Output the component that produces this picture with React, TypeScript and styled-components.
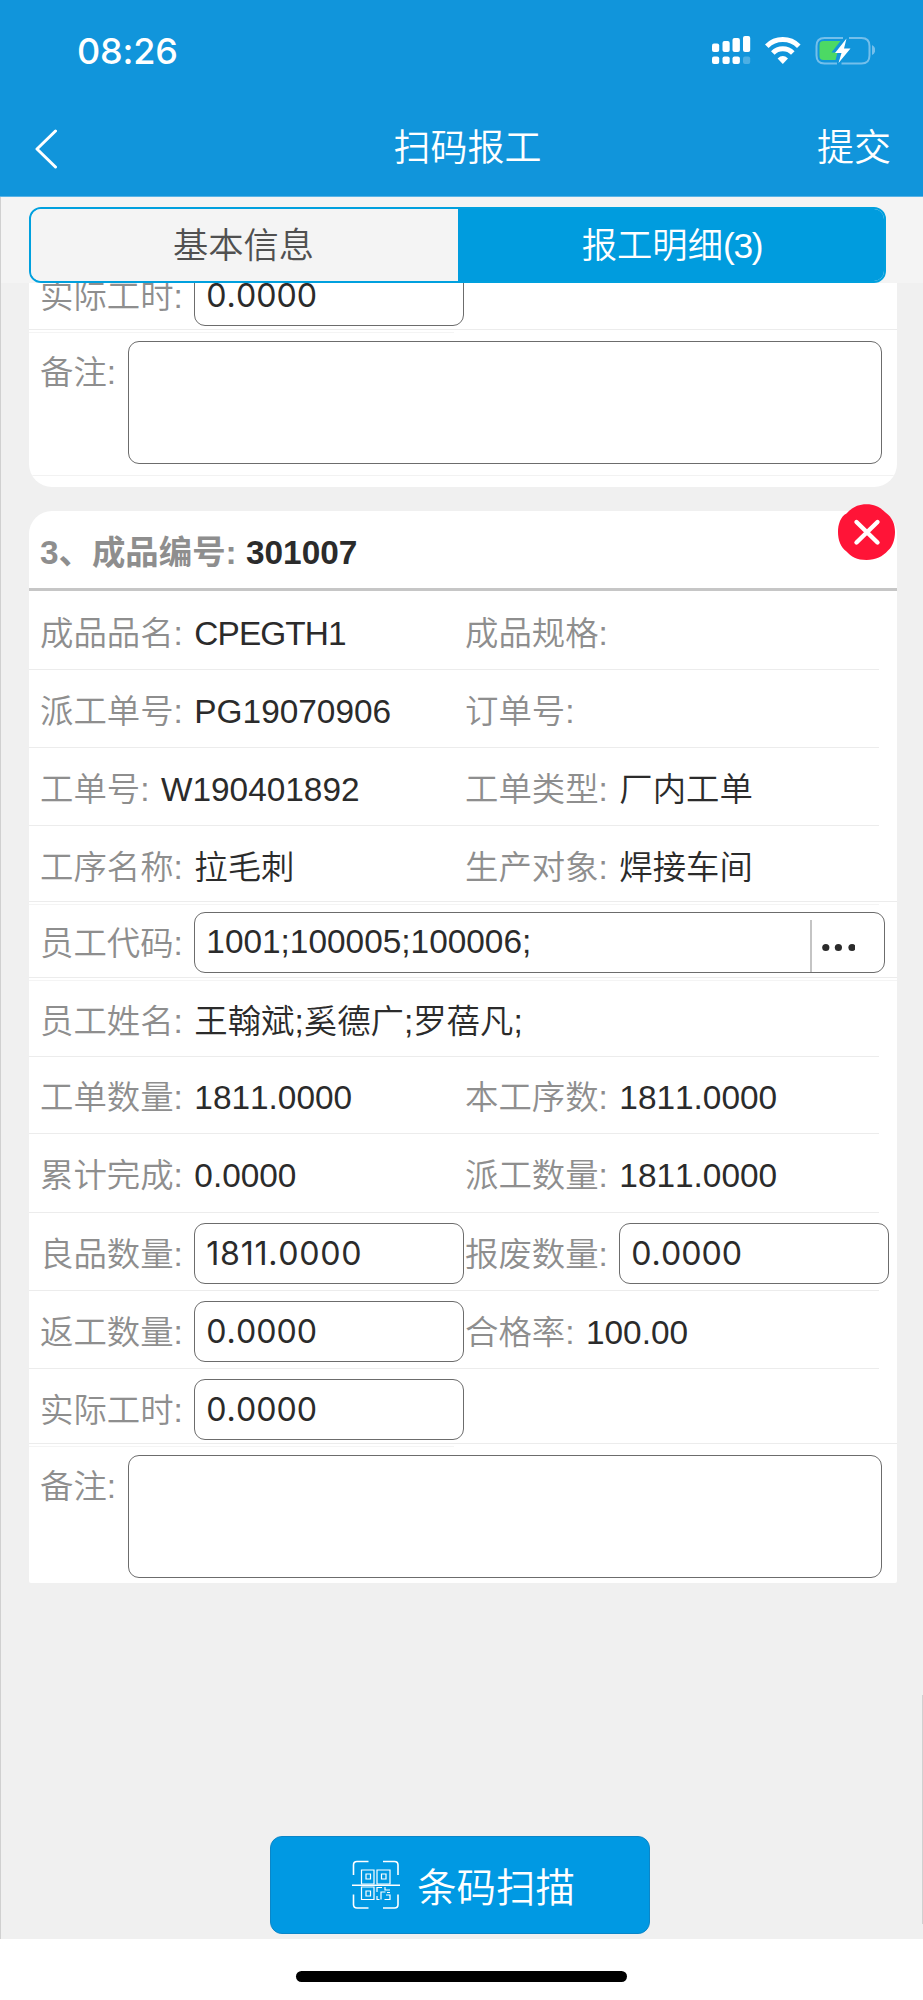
import React from 'react';
import styled, { createGlobalStyle, css } from 'styled-components';

const sans = `"Liberation Sans", "Noto Sans CJK SC", sans-serif`;

const GlobalStyle = createGlobalStyle`
  *, *::before, *::after { box-sizing: border-box; }
  body { margin: 0; background: #fff; font-family: ${sans}; font-kerning: none; color: #2b2b2b; }
  button, input, textarea { font: inherit; color: inherit; }
`;

const Page = styled.div`
  width: 923px;
  height: 2000px;
  display: flex;
  flex-direction: column;
  overflow: hidden;
`;

const TopArea = styled.header`
  height: 197px;
  flex: none;
  background: #1195db;
  border-bottom: 1px solid #58b3e6;
  color: #fff;
`;

const StatusBar = styled.div`
  height: 98px;
  padding: 0 48px 0 77px;
  display: flex;
  align-items: center;
  justify-content: space-between;
`;

const Clock = styled.span`
  padding-top: 4px;
  font-family: Inter, sans-serif;
  font-size: 36px;
  font-weight: 500;
  letter-spacing: -0.2px;
`;

const StatusIcons = styled.svg`
  display: block;
  width: 167px;
  height: 34px;
`;

const NavBar = styled.div`
  height: 98px;
  padding: 2px 32px 0 34px;
  display: grid;
  grid-template-columns: 84px 1fr 74px;
  align-items: center;
  font-size: 37px;
  font-weight: 350;
  line-height: 98px;
`;

const BackIcon = styled.svg`
  display: block;
  width: 24px;
  height: 40px;
`;

const Title = styled.h1`
  margin: 0;
  font: inherit;
  text-align: center;
`;

const TabStrip = styled.div`
  height: 86px;
  flex: none;
  padding: 10px 37px 0 28px;
  background: #f4f4f4;
  border-left: 1px solid #d0d0d0;
`;

const Tabs = styled.div`
  display: grid;
  grid-template-columns: 427px 430px;
  height: 76px;
  border: 2px solid #00a0de;
  border-radius: 12px;
  overflow: hidden;
`;

const Tab = styled.button<{ $active?: boolean }>`
  border: 0;
  padding: 0 2px 0 0;
  background: ${p => (p.$active ? '#009cde' : '#f4f4f4')};
  color: ${p => (p.$active ? '#fff' : '#505050')};
  font-size: 35.3px;
  font-weight: 350;
  line-height: 73px;
`;

const Count = styled.span`
  letter-spacing: -1.3px;
`;

const Body = styled.main`
  height: 1656px;
  flex: none;
  display: flex;
  flex-direction: column;
  padding: 0 26px 0 28px;
  background: linear-gradient(#d0d0d0, #d0d0d0) right 0 top 1412px / 1px 229px no-repeat #f0f0f0;
  border-left: 1px solid #d0d0d0;
`;

const Card = styled.section<{ $clip: 'top' | 'bottom'; $h: number }>`
  height: ${p => p.$h}px;
  flex: none;
  display: flex;
  flex-direction: column;
  justify-content: ${p => (p.$clip === 'top' ? 'flex-end' : 'flex-start')};
  background: #fff;
  border-radius: ${p => (p.$clip === 'top' ? '0 0 23px 23px' : '23px 23px 2px 2px')};
  ${p => p.$clip === 'top' && css`overflow: hidden;`}
  font-size: 33.4px;
  font-weight: 350;
`;

const CardSpacer = styled.div`
  height: 24px;
  flex: none;
`;

const CardFoot = styled.div`
  height: 11px;
  flex: none;
`;

const CardHead = styled.div`
  height: 80px;
  flex: none;
  display: flex;
  justify-content: space-between;
  padding: 0 2px 0 11px;
  border-bottom: 3px solid #c6c6c6;
`;

const CardTitle = styled.h2`
  margin: 0;
  font-size: 33.4px;
  font-weight: 700;
  line-height: 84px;
  white-space: pre;
`;

const CardTitleLabel = styled.span`
  color: #8e8e8e;
`;

const CloseIcon = styled.svg`
  display: block;
  width: 57px;
  height: 57px;
  margin-top: -7px;
`;

const Row = styled.div<{ $h: number; $line?: 'short' | 'full'; $top?: number }>`
  height: ${p => p.$h}px;
  flex: none;
  display: grid;
  grid-template-columns: 425px 432px;
  padding: ${p => p.$top ?? 0}px 0 0 11px;
  background: linear-gradient(#ececec, #ececec) left bottom no-repeat;
  background-size: ${p => (p.$line === 'full' ? '868px 1px' : '850px 1px')};
`;

const WideRow = styled(Row)`
  grid-template-columns: 857px;
`;

const Gap = styled.div<{ $w: number }>`
  width: ${p => p.$w}px;
  height: 3px;
  flex: none;
  border-bottom: 1px solid #f4f4f4;
`;

const Field = styled.div`
  display: flex;
  align-items: center;
  white-space: pre;
  line-height: 46px;
`;

const Label = styled.label`
  flex: none;
  margin-right: 2.2px;
  padding-top: 5px;
  color: #8e8e8e;
`;

const Value = styled.span<{ $track?: number }>`
  padding-top: 5px;
  letter-spacing: ${p => p.$track ?? 0}px;
`;

const boxed = css`
  border: 1px solid #6c6c6c;
  border-radius: 11px;
  background: #fff;
`;

const NumberBox = styled.input<{ $track?: number }>`
  ${boxed}
  flex: none;
  width: 270px;
  height: 61px;
  margin: 2px 0 0;
  padding: 0 11px;
  font-family: Inter, sans-serif;
  font-size: 32.2px;
  font-weight: 400;
  letter-spacing: ${p => p.$track ?? 0}px;
  outline: 0;
`;

const PickerBox = styled.div`
  ${boxed}
  width: 691px;
  height: 61px;
  margin-top: 2px;
  padding: 0 29px 0 11px;
  display: flex;
  align-items: center;
`;

const PickerText = styled.span`
  flex: 1;
  line-height: 56px;
  padding-bottom: 1px;
`;

const PickerMore = styled.svg`
  display: block;
  flex: none;
  width: 45px;
  height: 52px;
  margin-top: 7px;
`;

const NoteRow = styled.div<{ $h: number; $line?: boolean }>`
  height: ${p => p.$h}px;
  flex: none;
  display: flex;
  align-items: flex-start;
  padding: 8px 0 0 11px;
  line-height: 46px;
  white-space: pre;
  border-bottom: ${p => (p.$line ? '1px solid #f2f2f2' : '0')};
`;

const NoteLabel = styled(Label)`
  padding-top: 9px;
`;

const NoteBox = styled.textarea`
  ${boxed}
  width: 754px;
  height: 123px;
  margin: 0;
  outline: 0;
  resize: none;
`;

const ScanButton = styled.button`
  width: 380px;
  height: 98px;
  margin: auto 0 5px 241px;
  flex: none;
  display: flex;
  align-items: center;
  padding: 0 0 2px 80px;
  gap: 16px;
  border: 1px solid #0b86c8;
  border-radius: 12px;
  background: #0099e3;
  color: #fff;
  font-size: 39.5px;
  font-weight: 350;
`;

const ScanGlyph = styled.svg`
  display: block;
  flex: none;
  width: 50px;
  height: 50px;
  margin-top: 2px;
`;

const HomeArea = styled.footer`
  flex: 1;
  padding: 32px 0 0 296px;
  background: #fff;
`;

const HomeBar = styled.div`
  width: 331px;
  height: 11px;
  border-radius: 6px;
  background: #000;
`;

const StatusGlyphs = () => (
  <StatusIcons viewBox="708 32 167 34" fill="#fff">
    <rect x="712" y="43.5" width="7.2" height="8.5" rx="2" />
    <rect x="722.5" y="41" width="7.2" height="11" rx="2" />
    <rect x="732.5" y="38" width="7.4" height="14" rx="2" />
    <rect x="743" y="36" width="7.2" height="16" rx="2" />
    <rect x="712" y="56.5" width="7.2" height="7.5" rx="2" />
    <rect x="722.5" y="56.5" width="7.2" height="7.5" rx="2" />
    <rect x="732.5" y="56.5" width="7.4" height="7.5" rx="2" />
    <rect x="743" y="56.5" width="7.2" height="7.5" rx="2" opacity=".25" />
    <g fill="none" stroke="#fff" strokeWidth="5">
      <path d="M766.800 46.200a22.500 22.500 0 0 1 32 0" />
      <path d="M772.800 53a14 14 0 0 1 20 0" />
    </g>
    <path d="M777.6 58.4q5.2-4.6 10.4 0l-5.2 5.6z" />
    <path d="M843 38h-18.500q-8 0-8 8v9.500q0 8 8 8h12.500M849 38h12.500q8 0 8 8v9.500q0 8-8 8h-20" fill="none" stroke="#74bfeb" strokeWidth="2" />
    <path d="M872 45q3.200 1.500 3.200 5t-3.200 5z" fill="#74bfeb" />
    <path d="M824 41h16.500l-9 11.500h6l-2 7.500h-12q-4 0-4-4V45q0-4 4-4z" fill="#4cd964" />
    <path d="M846.500 38.500l-11.500 14.500h6.500l-3 10 12-14.500h-6.500z" />
  </StatusIcons>
);

type Item = { label: string; value?: string; input?: boolean; track?: number };

const FieldView = ({ label, value = '', input, track }: Item) => (
  <Field>
    <Label>{label}: </Label>
    {input ? <NumberBox defaultValue={value} $track={track} /> : <Value $track={track}>{value}</Value>}
  </Field>
);

type RowData = { h: number; top?: number; items: Item[] };

const basics: RowData[] = [
  { h: 79, top: 2, items: [{ label: '成品品名', value: 'CPEGTH1', track: -0.9 }, { label: '成品规格' }] },
  { h: 78, items: [{ label: '派工单号', value: 'PG19070906' }, { label: '订单号' }] },
  { h: 78, top: 1, items: [{ label: '工单号', value: 'W190401892' }, { label: '工单类型', value: '厂内工单' }] },
];

const quantities: RowData[] = [
  { h: 77, items: [{ label: '工单数量', value: '1811.0000' }, { label: '本工序数', value: '1811.0000' }] },
  { h: 79, items: [{ label: '累计完成', value: '0.0000' }, { label: '派工数量', value: '1811.0000' }] },
  { h: 78, items: [{ label: '良品数量', value: '1811.0000', input: true, track: 0.7 }, { label: '报废数量', value: '0.0000', input: true }] },
  { h: 78, items: [{ label: '返工数量', value: '0.0000', input: true }, { label: '合格率', value: '100.00' }] },
];

const rowsOf = (rows: RowData[]) =>
  rows.map(r => (
    <Row key={r.items[0].label} $h={r.h} $top={r.top}>
      {r.items.map(i => <FieldView key={i.label} {...i} />)}
    </Row>
  ));

const HoursRow = () => (
  <Row $h={75} $top={4} $line="full">
    <FieldView label="实际工时" value="0.0000" input />
  </Row>
);

export default function App() {
  return (
    <Page>
      <GlobalStyle />
      <TopArea>
        <StatusBar>
          <Clock>08:26</Clock>
          <StatusGlyphs />
        </StatusBar>
        <NavBar>
          <BackIcon viewBox="0 0 24 40" fill="none" stroke="#fff" strokeWidth="3" strokeLinecap="round" strokeLinejoin="round">
            <path d="M21.500 2L3 20l18.500 18" />
          </BackIcon>
          <Title>扫码报工</Title>
          <span>提交</span>
        </NavBar>
      </TopArea>
      <TabStrip>
        <Tabs>
          <Tab>基本信息</Tab>
          <Tab $active>报工明细<Count>(3)</Count></Tab>
        </Tabs>
      </TabStrip>
      <Body>
        <Card $clip="top" $h={204}>
          <HoursRow />
          <Gap $w={425} />
          <NoteRow $h={143} $line>
            <NoteLabel>备注: </NoteLabel>
            <NoteBox />
          </NoteRow>
          <CardFoot />
        </Card>
        <CardSpacer />
        <Card $clip="bottom" $h={1072}>
          <CardHead>
            <CardTitle><CardTitleLabel>3、成品编号: </CardTitleLabel>301007</CardTitle>
            <CloseIcon viewBox="0 0 57 57">
              <path d="M28.500 .3C38 .3 43.500 4.500 47.500 8.500 54.500 13.500 57 20.500 57 28S54.500 43 50 46.500C44.500 52.500 38 56 28.500 56S13 52.500 8.500 47.500C2.500 43.500 0 35.500 0 28S2.500 12.500 8.500 9.500C13 4.500 19 .3 28.500 .3z" fill="#ff1437" />
              <path d="M18.500 18l21 20.500M39.500 18l-21 20.500" stroke="#fff" strokeWidth="4.400" strokeLinecap="round" />
            </CloseIcon>
          </CardHead>
          {rowsOf(basics)}
          <Row $h={76} $top={3} $line="full">
            <FieldView label="工序名称" value="拉毛刺" />
            <FieldView label="生产对象" value="焊接车间" />
          </Row>
          <Gap $w={850} />
          <WideRow $h={73} $line="full">
            <Field>
              <Label>员工代码: </Label>
              <PickerBox>
                <PickerText>1001;100005;100006;</PickerText>
                <PickerMore viewBox="0 0 45 52" fill="#2b2b2b">
                  <path d="M1 0v52" stroke="#c4c4c4" strokeWidth="2" />
                  <circle cx="15.800" cy="27.500" r="3.600" />
                  <circle cx="28.400" cy="27.500" r="3.600" />
                  <circle cx="42" cy="27.500" r="3.600" />
                </PickerMore>
              </PickerBox>
            </Field>
          </WideRow>
          <Gap $w={868} />
          <WideRow $h={76}>
            <Field>
              <Label>员工姓名: </Label>
              <Value>王翰斌;奚德广;罗蓓凡;</Value>
            </Field>
          </WideRow>
          {rowsOf(quantities)}
          <HoursRow />
          <Gap $w={425} />
          <NoteRow $h={136}>
            <NoteLabel>备注: </NoteLabel>
            <NoteBox />
          </NoteRow>
        </Card>
        <ScanButton>
          <ScanGlyph viewBox="0 0 50 50" fill="none" stroke="#fff" strokeWidth="1.600">
            <path d="M2.500 15V5q0-3.500 3.500-3.500h11.500M32 1.500h11.500Q47 1.500 47 5v10M47 34.500v10q0 3.500-3.500 3.500H32M17.500 48H6q-3.500 0-3.500-3.500v-10M1 25.300h48" />
            <g strokeWidth="1.200">
              <path d="M10.500 10h12.500v14H10.500zM26 10h13v14H26zM10.500 27h12.500v12.500H10.500z" />
              <path d="M15 14h4.500v5H15zM30.500 14h4.500v5h-4.500zM15 31h4.500v5H15z" />
              <path d="M26 32v-4.500h5M34 27v3h5M26 36v3.500h2.500M30 39.500v-7.500h4.500M33.500 39.500H39v-4.500h-4M36 32.500h3" />
            </g>
          </ScanGlyph>
          条码扫描
        </ScanButton>
      </Body>
      <HomeArea>
        <HomeBar />
      </HomeArea>
    </Page>
  );
}
